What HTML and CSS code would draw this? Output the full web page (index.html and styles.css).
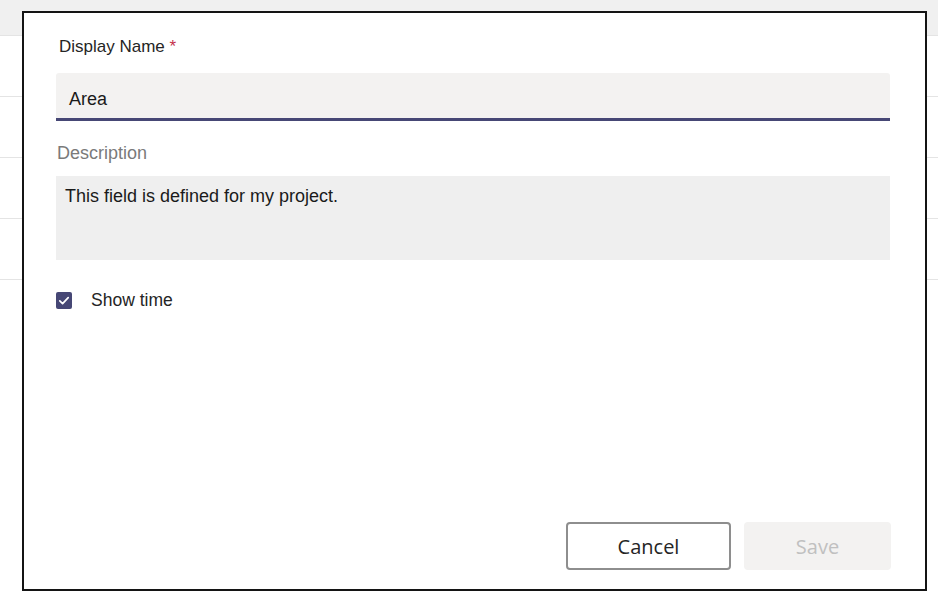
FILE: index.html
```html
<!DOCTYPE html>
<html>
<head>
<meta charset="utf-8">
<link rel="stylesheet" href="styles.css">
</head>
<body>
<div class="page">
  <div class="topbar"></div>
  <div class="row"></div>
  <div class="row"></div>
  <div class="row"></div>
  <div class="row"></div>
</div>
<div class="dialog">
  <label class="label name-label">Display Name <span class="req">*</span></label>
  <div class="input">Area</div>
  <label class="label desc-label">Description</label>
  <div class="textarea">This field is defined for my project.</div>
  <div class="check-row">
    <span class="checkbox">
      <svg width="16" height="17" viewBox="0 0 16 17"><path d="M3.8 8.8 L6.6 11.6 L12.2 5.6" fill="none" stroke="#fff" stroke-width="1.7" stroke-linecap="round" stroke-linejoin="round"/></svg>
    </span>
    <span class="check-text">Show time</span>
  </div>
  <div class="spacer"></div>
  <div class="actions">
    <button class="btn cancel">Cancel</button>
    <button class="btn save">Save</button>
  </div>
</div>
</body>
</html>
```
FILE: styles.css
```css
html, body {
  margin: 0;
  padding: 0;
  background: #ffffff;
  width: 938px;
  height: 614px;
  overflow: hidden;
  font-family: "Liberation Sans", Arial, sans-serif;
}
.page {
  display: flex;
  flex-direction: column;
}
.topbar {
  height: 35px;
  background: #f0f0f0;
  border-bottom: 1px solid #e4e4e4;
}
.row {
  height: 60px;
  border-bottom: 1px solid #e4e4e4;
}
.dialog {
  position: absolute;
  left: 22px;
  top: 11px;
  border: 2px solid #141414;
  background: #ffffff;
  display: flex;
  flex-direction: column;
  padding: 24px 30px 19px 32px;
  box-sizing: content-box;
  width: 839px;
  height: 533px;
}
.label {
  display: block;
  font-size: 17px;
  line-height: 20px;
  color: #252525;
}
.name-label {
  margin-left: 3px;
  margin-bottom: 16px;
}
.req {
  color: #c4314b;
}
.input {
  width: 821px;
  height: 39px;
  line-height: 40px;
  padding: 6px 0 0 13px;
  background: #f3f2f1;
  border-bottom: 3px solid #464775;
  border-radius: 3px 3px 0 0;
  font-size: 18px;
  color: #1a1a1a;
}
.desc-label {
  margin-top: 22px;
  margin-left: 1px;
  margin-bottom: 13px;
  font-size: 18px;
  color: #7a7a7a;
}
.textarea {
  width: 825px;
  height: 75px;
  padding: 9px 0 0 9px;
  background: #efefef;
  font-size: 18px;
  line-height: 22px;
  color: #1a1a1a;
}
.check-row {
  margin-top: 30px;
  display: flex;
  align-items: center;
  height: 20px;
}
.checkbox {
  width: 16px;
  height: 17px;
  background: #464775;
  border-radius: 2px;
  display: flex;
}
.check-text {
  margin-left: 19px;
  font-size: 17.5px;
  color: #252525;
}
.spacer {
  flex: 1;
}
.actions {
  display: flex;
  justify-content: flex-end;
  gap: 13px;
  width: 835px;
}
.btn {
  height: 48px;
  font-family: "Open Sans", "Noto Sans", sans-serif;
  font-size: 20px;
  border-radius: 4px;
  padding: 0;
  box-sizing: border-box;
}
.cancel {
  width: 165px;
  background: #ffffff;
  border: 2px solid #8e8e8e;
  color: #252525;
}
.save {
  width: 147px;
  background: #f3f2f1;
  border: none;
  color: #c0c0c0;
}
```
